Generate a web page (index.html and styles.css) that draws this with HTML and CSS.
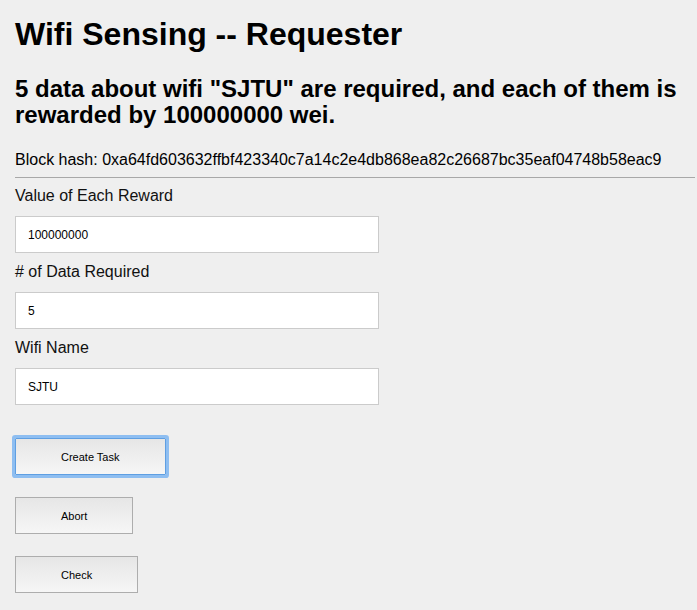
FILE: index.html
```html
<!DOCTYPE html>
<html>
<head>
<meta charset="utf-8">
<title>Wifi Sensing -- Requester</title>
<link rel="stylesheet" href="styles.css">
</head>
<body>
<div class="page">
  <h1 class="title">Wifi Sensing -- Requester</h1>
  <h2 class="subtitle">5 data about wifi "SJTU" are required, and each of them is rewarded by 100000000 wei.</h2>
  <p class="hash">Block hash: 0xa64fd603632ffbf423340c7a14c2e4db868ea82c26687bc35eaf04748b58eac9</p>
  <hr class="rule">
  <form class="form">
    <label class="label">Value of Each Reward</label>
    <input class="field" type="text" value="100000000">
    <label class="label"># of Data Required</label>
    <input class="field" type="text" value="5">
    <label class="label">Wifi Name</label>
    <input class="field" type="text" value="SJTU">
    <div class="actions">
      <button type="button" class="btn btn-focus">Create Task</button>
      <button type="button" class="btn">Abort</button>
      <button type="button" class="btn">Check</button>
    </div>
  </form>
</div>
</body>
</html>
```

FILE: styles.css
```css
html, body {
  margin: 0;
  padding: 0;
  background: #efefef;
}
body {
  font-family: "Liberation Sans", Arial, Helvetica, sans-serif;
  color: #000;
}
.page {
  padding: 16px 2px 0 15px;
}
.title {
  font-size: 32px;
  font-weight: bold;
  line-height: 37px;
  margin: 0 0 23px 0;
}
.subtitle {
  font-size: 24px;
  font-weight: bold;
  line-height: 26px;
  margin: 0 0 23px 0;
}
.hash {
  font-size: 16px;
  line-height: 18px;
  margin: 0;
}
.rule {
  border: 0;
  border-top: 1px solid #a8a8a8;
  margin: 8px 0 8px 0;
  height: 0;
}
.form {
  display: flex;
  flex-direction: column;
  align-items: flex-start;
}
.label {
  display: block;
  font-size: 16px;
  line-height: 20px;
  margin-bottom: 10px;
  color: #111;
}
.field {
  box-sizing: border-box;
  width: 364px;
  height: 37px;
  border: 1px solid #cbcbcb;
  background: #fff;
  padding: 0 12px;
  font-family: "Liberation Sans", Arial, sans-serif;
  font-size: 12px;
  color: #000;
  margin: 0 0 9px 0;
  outline: none;
}
.actions {
  display: flex;
  flex-direction: column;
  align-items: flex-start;
  gap: 22px;
  margin-top: 24px;
}
.btn {
  box-sizing: border-box;
  height: 37px;
  padding: 0 45px;
  border: 1px solid #adadad;
  border-radius: 0;
  background: linear-gradient(#e6e6e6, #f6f6f6);
  font-family: "Liberation Sans", Arial, sans-serif;
  font-size: 11px;
  color: #000;
}
.btn-focus {
  border-color: #5f9fe2;
  box-shadow: 0 0 0 3px #8ebef1;
  border-radius: 1px;
}
```
